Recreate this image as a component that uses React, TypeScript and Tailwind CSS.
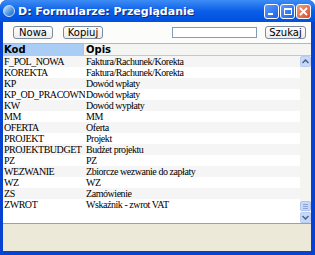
import React from "react";

const rows: [string, string][] = [
  ["F_POL_NOWA", "Faktura/Rachunek/Korekta"],
  ["KOREKTA", "Faktura/Rachunek/Korekta"],
  ["KP", "Dowód wpłaty"],
  ["KP_OD_PRACOWNIKA", "Dowód wpłaty"],
  ["KW", "Dowód wypłaty"],
  ["MM", "MM"],
  ["OFERTA", "Oferta"],
  ["PROJEKT", "Projekt"],
  ["PROJEKTBUDGET", "Budżet projektu"],
  ["PZ", "PZ"],
  ["WEZWANIE", "Zbiorcze wezwanie do zapłaty"],
  ["WZ", "WZ"],
  ["ZS", "Zamówienie"],
  ["ZWROT", "Wskaźnik - zwrot VAT"],
];

function XPButton({ label, w }: { label: string; w: string }) {
  return (
    <div
      className={`${w} h-[13px] flex items-center justify-center rounded-[3px] border border-[#7a8aa0] bg-gradient-to-b from-white to-[#ecebe6] text-[10px] leading-none text-black`}
      style={{ fontFamily: "'DejaVu Sans', sans-serif" }}
    >
      {label}
    </div>
  );
}

export default function App() {
  return (
    <div className="w-[315px] h-[255px] flex flex-col bg-[#0842d0] rounded-t-[7px] overflow-hidden">
      {/* Title bar */}
      <div className="h-[22px] flex items-center bg-gradient-to-b from-[#3d8cf5] via-[#0a5ee8] to-[#0250e0] pl-[3px] pr-[4px]">
        <div className="w-[12px] h-[12px] rounded-full bg-gradient-to-br from-[#d8ecff] via-[#5aa0e8] to-[#1d5cb8] border border-[#c8e0ff] mr-[3px]" />
        <div
          className="text-white font-bold text-[11px] leading-none"
          style={{ fontFamily: "'DejaVu Sans', sans-serif", textShadow: "1px 1px 0 #0a2a8a" }}
        >
          D: Formularze: Przeglądanie
        </div>
        <div className="ml-auto flex gap-[1px]">
          <div className="w-[15px] h-[15px] rounded-[3px] border border-white bg-gradient-to-br from-[#5b9bff] to-[#1a5fe6] flex items-end justify-start p-[3px]">
            <div className="w-[5px] h-[2px] bg-white" />
          </div>
          <div className="w-[15px] h-[15px] rounded-[3px] border border-white bg-gradient-to-br from-[#5b9bff] to-[#1a5fe6] flex items-center justify-center">
            <div className="w-[8px] h-[7px] border border-white border-t-2" />
          </div>
          <div className="w-[15px] h-[15px] rounded-[3px] border border-white bg-gradient-to-br from-[#f0a080] to-[#d8462a] flex items-center justify-center">
            <svg width="9" height="9" viewBox="0 0 9 9">
              <path d="M1 1 L8 8 M8 1 L1 8" stroke="white" strokeWidth="1.8" />
            </svg>
          </div>
        </div>
      </div>

      {/* Body */}
      <div className="flex-1 flex flex-col ml-[3px] mr-[4px] mb-[4px] bg-white">
        {/* Toolbar */}
        <div className="h-[21px] flex items-center bg-[#fcfcfb] pl-[10px] pr-[5px]">
          <XPButton label="Nowa" w="w-[40px]" />
          <div className="w-[10px]" />
          <XPButton label="Kopiuj" w="w-[40px]" />
          <div className="ml-auto w-[85px] h-[11px] border border-[#7f9db9] bg-white" />
          <div className="w-[8px]" />
          <XPButton label="Szukaj" w="w-[41px]" />
        </div>

        {/* List */}
        <div className="h-[181px] flex flex-col border-t border-[#b8b8b0] border-b border-b-[#a0a098]">
          <div
            className="h-[12px] flex border-b border-[#c8c8c0] bg-[#f4f4f2] text-[10px] font-bold leading-none"
            style={{ fontFamily: "'DejaVu Sans', sans-serif" }}
          >
            <div className="w-[81px] bg-[#a9cdf4] flex items-center pl-[1px] border-r border-[#c0c0c0]">Kod</div>
            <div className="flex items-center pl-[2px]">Opis</div>
          </div>
          <div className="flex-1 flex">
            <div className="flex-1 flex flex-col" style={{ fontFamily: "'Liberation Serif', serif" }}>
              {rows.map(([k, o], i) => (
                <div
                  key={k}
                  className={`h-[11px] flex items-center text-[10px] tracking-[-0.45px] leading-none text-black ${i % 2 === 0 ? "bg-[#f5f5f5]" : "bg-white"}`}
                >
                  <div className="w-[82px] shrink-0 pl-[1px] overflow-hidden whitespace-nowrap">{k}</div>
                  <div className="pl-[1px] whitespace-nowrap">{o}</div>
                </div>
              ))}
            </div>
            {/* Scrollbar */}
            <div className="w-[11px] flex flex-col bg-[#f4f4f0]">
              <div className="h-[11px] rounded-[2px] bg-[#c8d8fa] border border-[#b8ccf4] flex items-center justify-center">
                <svg width="7" height="5" viewBox="0 0 7 5">
                  <path d="M0.5 4 L3.5 1 L6.5 4" stroke="#4d6185" strokeWidth="1.5" fill="none" />
                </svg>
              </div>
              <div className="flex-1" />
              <div className="h-[10px] rounded-[2px] bg-[#c8d8fa] border border-[#b0c4f0] flex flex-col items-center justify-center gap-[1px]">
                <div className="w-[5px] h-[1px] bg-[#8aa4d8]" />
                <div className="w-[5px] h-[1px] bg-[#8aa4d8]" />
                <div className="w-[5px] h-[1px] bg-[#8aa4d8]" />
              </div>
              <div className="h-[1px]" />
              <div className="h-[11px] rounded-[2px] bg-[#c8d8fa] border border-[#b8ccf4] flex items-center justify-center">
                <svg width="7" height="5" viewBox="0 0 7 5">
                  <path d="M0.5 1 L3.5 4 L6.5 1" stroke="#4d6185" strokeWidth="1.5" fill="none" />
                </svg>
              </div>
            </div>
          </div>
        </div>

        {/* Status area */}
        <div className="flex-1 bg-[#ece9d8]" />
      </div>
    </div>
  );
}
